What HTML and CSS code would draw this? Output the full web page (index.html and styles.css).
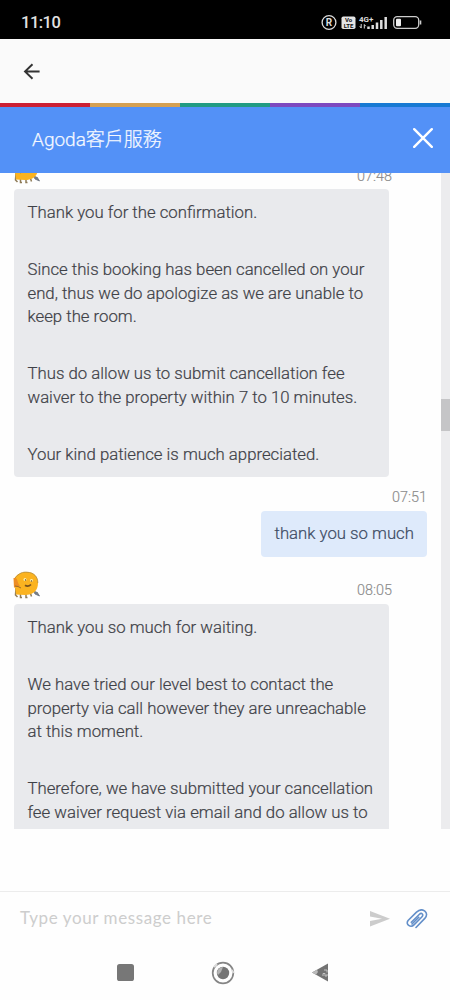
FILE: index.html
```html
<!DOCTYPE html>
<html lang="zh-Hant">
<head>
<meta charset="utf-8">
<title>Agoda客戶服務</title>
<link rel="stylesheet" href="styles.css">
</head>
<body>
<svg class="defs" width="0" height="0" aria-hidden="true">
  <symbol id="mascot" viewBox="0 0 28 28">
    <path d="M3 17 L2.5 24 L4.5 26 M7.5 21 V26.5 H9 M13 22 V26.5 H14.5 M17 21 L18.5 25.5" fill="none" stroke="#8f7c58" stroke-width="1.5"/>
    <path d="M20 19 L22 23 L26.5 25 L24 21" fill="#777e88" stroke="#68717d" stroke-width=".8"/>
    <path d="M13 1 C20 .5 25 5 25 12 C25 20 20 24 12 24 L3 23.5 L1 8 C4 3 8 1 13 1Z" fill="#fbb320"/>
    <path d="M2 7 C5 7 4 12 7 15 C4 17 2 15 1 17 L.5 7Z" fill="#ed8d24"/>
    <path d="M2 7 C6 2 10 .8 14 1.2 C21 1.5 25 6 24.8 12" fill="none" stroke="#b28b3e" stroke-width=".8"/>
    <circle cx="12" cy="8.5" r="1.5" fill="#fff0b0"/><circle cx="18.5" cy="9.5" r="1.4" fill="#fff0b0"/>
    <circle cx="12.5" cy="9" r=".7" fill="#684415"/><circle cx="18.5" cy="10" r=".7" fill="#684415"/>
    <path d="M12 14.3 Q15 16.5 18 13.5" fill="none" stroke="#77511d" stroke-width="1.7"/>
    <path d="M2 15 Q5 15 8 17" fill="none" stroke="#9b6b2c"/>
  </symbol>
</svg>
<div class="screen">
  <header class="status">
    <span class="clock">11:10</span>
    <svg class="status-icons" width="102" height="18" viewBox="0 0 102 18">
      <circle cx="9" cy="9.5" r="6.9" fill="none" stroke="#ddd" stroke-width="1.3"/>
      <text x="9" y="13.1" class="glyph r-mark">R</text>
      <rect x="21.5" y="3.5" width="14" height="12.5" rx="1.8" fill="#e4e4e4"/>
      <text x="28.5" y="9" class="glyph volte">Vo</text>
      <text x="28.5" y="14.9" class="glyph volte">LTE</text>
      <text x="39" y="8.6" class="glyph network">4G+</text>
      <path d="M41.2 15V11M39.8 13.2L41.2 15.1M44.3 15.5V11.5M44.3 11.5L45.7 13.2" stroke="#ddd" stroke-width="1" fill="none"/>
      <path d="M48.5 16V13.5M52.7 16V12M57 16V9.5M61.3 16V6.9M65.7 16V4" stroke="#ddd" stroke-width="2.5"/>
      <rect x="73.7" y="3.7" width="25" height="11.6" rx="3.5" fill="none" stroke="#ccc" stroke-width="1.3"/>
      <rect x="76" y="5.7" width="5" height="7.6" rx="1" fill="#eee"/>
      <path d="M100.5 7.5V11.5" stroke="#ccc" stroke-width="1.6"/>
    </svg>
  </header>
  <div class="toolbar">
    <svg width="18" height="18" viewBox="0 0 18 18"><path d="M16.6 8.5H2M9.5 1.2L2 8.5L9.5 15.8" fill="none" stroke="#333" stroke-width="1.9"/></svg>
  </div>
  <div class="stripes"><i class="red"></i><i class="yellow"></i><i class="green"></i><i class="purple"></i><i class="blue"></i></div>
  <div class="title-bar">
    <h1>Agoda客戶服務</h1>
    <svg width="20" height="20" viewBox="0 0 20 20"><path d="M1.2 1.2L18.8 18.8M18.8 1.2L1.2 18.8" stroke="#fff" stroke-width="2.4" stroke-linecap="round"/></svg>
  </div>
  <main class="chat">
    <div class="messages">
      <div class="meta first"><svg class="avatar"><use href="#mascot"/></svg><time>07:48</time></div>
      <div class="bubble agent">
        <p>Thank you for the confirmation.</p>
        <p>Since this booking has been cancelled on your<br>end, thus we do apologize as we are unable to<br>keep the room.</p>
        <p>Thus do allow us to submit cancellation fee<br>waiver to the property within 7 to 10 minutes.</p>
        <p>Your kind patience is much appreciated.</p>
      </div>
      <div class="mine">
        <time>07:51</time>
        <div class="bubble guest"><p>thank you so much</p></div>
      </div>
      <div class="meta"><svg class="avatar"><use href="#mascot"/></svg><time>08:05</time></div>
      <div class="bubble agent">
        <p>Thank you so much for waiting.</p>
        <p>We have tried our level best to contact the<br>property via call however they are unreachable<br>at this moment.</p>
        <p>Therefore, we have submitted your cancellation<br>fee waiver request via email and do allow us to<span class="next-line">give feedback</span></p>
      </div>
    </div>
    <div class="scrollbar"><div class="thumb"></div></div>
  </main>
  <div class="composer">
    <span class="placeholder">Type your message here</span>
    <svg class="send" width="20" height="16" viewBox="0 0 20 16"><path d="M0 0L20 7.8L0 15.6V10L12 7.8L0 5.5Z" fill="#ccc"/></svg>
    <svg class="clip" width="22" height="20" viewBox="0 0 22 20"><path d="M5.3 13.3L13.2 5.5C15.7 3.1 18.2 5.6 15.8 8L8.2 15.6C4.7 19.3 -.9 15.5 2.1 11.5L10.5 3.2C16.5-2.3 24 3.5 18.8 9.4L10 18.5M12.8 8.3L6 15" fill="none" stroke="#638fc9" stroke-width="1.6" stroke-linecap="round"/></svg>
  </div>
  <nav class="system-nav">
    <svg width="17" height="17" viewBox="0 0 17 17"><rect width="17" height="17" rx="2.6" fill="#777"/></svg>
    <svg width="24" height="24" viewBox="0 0 24 24"><circle cx="12" cy="12" r="10.3" fill="none" stroke="#858585" stroke-width="1.7"/><path d="M3 6L6 3M21 9L22.5 12" stroke="#ddd" stroke-width="1.8"/><circle cx="12" cy="12" r="6.2" fill="#747474"/><path d="M6 12A6 6 0 0 1 12 6L10 11L7 14Z" fill="#b3b3b3"/></svg>
    <svg width="17" height="19" viewBox="0 0 17 19"><path d="M0 9.5L16 .5V18.5Z" fill="#737373"/><path d="M0 9.5L5 6.7L6 9L4 11.8Z" fill="#bbb"/><path d="M12 7H15V9.5M11 13V10.5H13V13H15V11" fill="none" stroke="#ccc" stroke-width=".9"/></svg>
  </nav>
</div>
</body>
</html>
```
FILE: styles.css
```css
* { box-sizing: border-box; }
body { margin: 0; font-family: Roboto, "Noto Sans CJK TC", sans-serif; }
h1, p { margin: 0; font-weight: 300; }
svg { display: block; flex: none; }
.defs { position: absolute; }
.screen { width: 450px; height: 1000px; display: flex; flex-direction: column; background: #fefefe; overflow: hidden; }
.status { height: 39px; flex: none; background: #000; display: flex; justify-content: space-between; padding: 13px 28px 0 21px; }
.clock { color: #e2e2e2; font-size: 16.5px; line-height: 20px; font-weight: 500; letter-spacing: -.5px; }
.glyph { font-family: Roboto, sans-serif; font-weight: 700; }
.r-mark { font-size: 10px; fill: #ddd; text-anchor: middle; }
.volte { font-size: 6px; fill: #111; text-anchor: middle; }
.network { font-size: 8px; fill: #ddd; }
.toolbar { height: 64px; flex: none; background: #fafafa; padding: 24px 0 0 23px; }
.stripes { height: 4px; flex: none; display: flex; }
.stripes i { flex: 1; }
.red { background: #cb2034; }
.yellow { background: #d5a052; }
.green { background: #219b83; }
.purple { background: #7d49bf; }
.blue { background: #1779d3; }
.title-bar { height: 66px; flex: none; background: #5391f7; display: flex; align-items: flex-start; justify-content: space-between; padding: 20px 17px 0 32px; }
.title-bar h1 { color: #f4f8ff; font-size: 19px; line-height: 26px; -webkit-text-stroke: .25px currentColor; }
.title-bar svg { margin-top: 1px; }
.chat { height: 656px; flex: none; display: flex; overflow: hidden; }
.messages { flex: 1; padding-left: 14px; }
.scrollbar { width: 9px; background: #ececee; padding-top: 226px; }
.thumb { height: 32px; background: #c5c5c7; }
.meta { height: 33px; width: 378px; display: flex; justify-content: space-between; }
.meta.first { margin-top: -17px; }
.avatar { width: 28px; height: 28px; margin-left: -1px; }
time { color: #8b8b8b; font-size: 14.4px; line-height: 18px; font-weight: 300; -webkit-text-stroke: .15px currentColor; }
.meta time { margin-top: 11px; }
.meta.first time { margin-top: 12px; }
.bubble { border-radius: 4px; font-size: 16.76px; line-height: 23.8px; color: #3e4147; white-space: nowrap; -webkit-text-stroke: .2px currentColor; }
.agent { width: 375px; padding: 12px 13.5px 10.5px; background: #e9eaed; }
.agent p + p { margin-top: 33px; }
.next-line { display: block; padding-top: 1.2px; }
.mine { display: flex; flex-direction: column; align-items: flex-end; padding: 12px 14px 14.5px 0; }
.mine time { margin-bottom: 3.5px; }
.guest { width: 166px; height: 46px; padding: 11.5px 13.5px; background: #deeafb; color: #3c4b63; }
.composer { height: 54px; flex: none; margin-top: 62px; border-top: 1px solid #ececec; display: flex; align-items: center; padding: 0 22px 0 20px; }
.placeholder { flex: 1; color: #cdcdcd; font-family: Lato, sans-serif; font-size: 17px; line-height: 22px; letter-spacing: .6px; padding-bottom: 2px; }
.clip { margin-left: 16px; }
.system-nav { height: 55px; flex: none; display: flex; align-items: center; padding-left: 117px; }
.system-nav svg:nth-child(2) { margin-left: 77px; }
.system-nav svg:nth-child(3) { margin-left: 77px; }
```
